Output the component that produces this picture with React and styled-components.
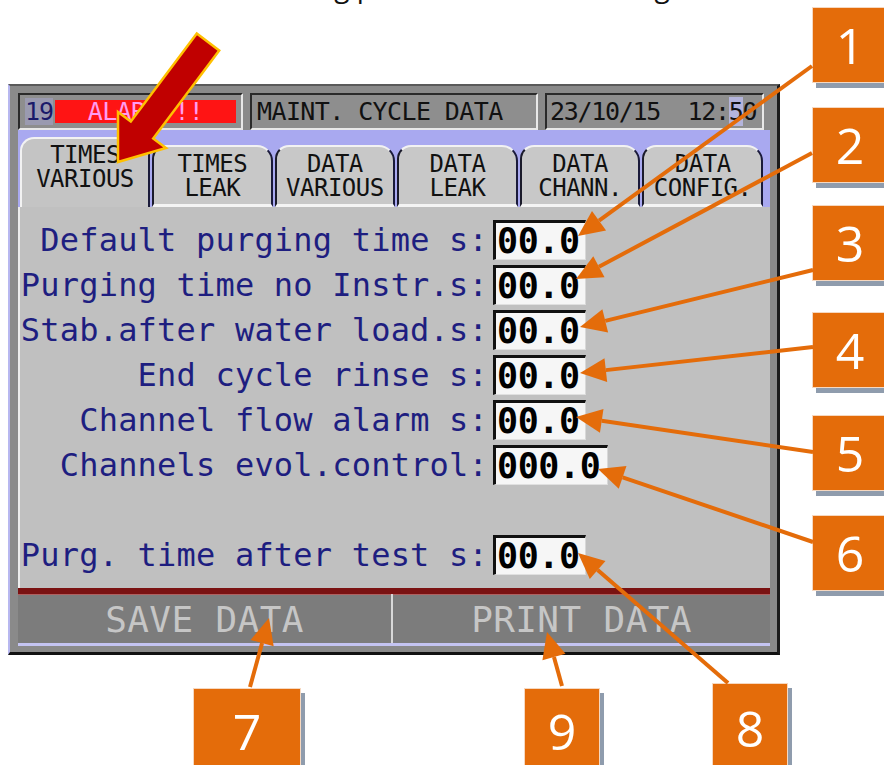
import * as React from "react"
import styled, { createGlobalStyle } from "styled-components"

const GlobalStyle = createGlobalStyle`
    html, body {
        margin: 0;
        padding: 0;
        background: #ffffff;
    }
`

const MONO = `"DejaVu Sans Mono", "Liberation Mono", monospace`
const ORANGE = "#e46c0a"

const Page = styled.div`
    position: relative;
    width: 884px;
    height: 765px;
    overflow: hidden;
    background: #ffffff;
    display: flex;
    flex-direction: column;
`

const MainRow = styled.div`
    display: flex;
    align-items: flex-start;
    height: 655px;
    flex-shrink: 0;
`

const LeftColumn = styled.div`
    width: 780px;
    flex-shrink: 0;
`

const Caption = styled.div`
    height: 84px;
    overflow: hidden;
`

const CaptionLine = styled.div`
    display: flex;
    margin-top: -28px;
    font-family: "Open Sans", sans-serif;
    font-size: 28px;
    line-height: 28px;
    color: #111;
    white-space: pre;
`

const CaptionWord = styled.span`
    margin-left: ${props => props.$left}px;
`

const Frame = styled.div`
    margin-left: 8px;
    width: 772px;
    height: 571px;
    box-sizing: border-box;
    background: #8a8a8a;
    border-top: 2px solid #5a5a5a;
    border-left: 2px solid #b8b8f0;
    border-right: 3px solid #1c1c1c;
    border-bottom: 3px solid #111;
    padding: 0 7px 0 8px;
    display: flex;
    flex-direction: column;
`

const Header = styled.div`
    height: 44px;
    box-sizing: border-box;
    padding-top: 7px;
    display: flex;
    gap: 7px;
`

const HeaderBox = styled.div`
    width: ${props => props.$width}px;
    height: 37px;
    box-sizing: border-box;
    border-top: 2px solid #2a2a2a;
    border-left: 2px solid #2a2a2a;
    border-right: 2px solid #e8e8e8;
    border-bottom: 2px solid #e8e8e8;
    background: #8e8e8e;
    display: flex;
    align-items: center;
    padding: 0 ${props => (props.$tight ? 3 : 5)}px;
    font-family: ${MONO};
    font-size: 25px;
    letter-spacing: ${props => (props.$tight ? -1.3 : -0.6)}px;
    color: #111;
    white-space: pre;
    overflow: hidden;
`

const AlarmNumber = styled.div`
    width: 28px;
    height: 27px;
    background: #9a9ab0;
    color: #1a1a6a;
    display: flex;
    align-items: center;
    font-family: ${MONO};
    font-size: 25px;
    letter-spacing: -1px;
`

const AlarmText = styled.div`
    flex: 1;
    height: 23px;
    margin-left: 2px;
    background: #ff1414;
    color: #ff9cf0;
    display: flex;
    align-items: center;
    justify-content: center;
    font-family: ${MONO};
    font-size: 25px;
    letter-spacing: -0.6px;
`

const Blink = styled.span`
    background: #b4b4dc;
`

const TabStrip = styled.div`
    height: 77px;
    box-sizing: border-box;
    background: #a9a9f0;
    padding: 7px 7px 0 2px;
    display: grid;
    grid-template-columns: 130px repeat(5, 1fr);
    column-gap: 2px;
    align-items: end;
`

const Tab = styled.div`
    height: ${props => (props.$active ? 70 : 62)}px;
    box-sizing: border-box;
    background: ${props => (props.$active ? "#c4c4c4" : "#c8c8c8")};
    border-radius: 14px 16px 0 0;
    border-top: 2px solid #f2f2f2;
    border-left: 2px solid ${props => (props.$active ? "#f2f2f2" : "#1a1a2a")};
    border-right: 2px solid #1a1a3a;
    border-bottom: ${props => (props.$active ? "none" : "3px solid #f4f4f4")};
    padding-top: ${props => (props.$active ? 4 : 5)}px;
    text-align: center;
    font-family: ${MONO};
    font-size: 24px;
    line-height: 24px;
    letter-spacing: -0.5px;
    color: #111;
    white-space: pre;
`

const Body = styled.div`
    height: 381px;
    box-sizing: border-box;
    background: #c0c0c0;
    border-left: 2px solid #ececec;
    padding-top: 13px;
`

const Row = styled.div`
    height: 45px;
    display: grid;
    grid-template-columns: 468px auto;
    column-gap: 5px;
    align-items: start;
`

const Label = styled.div`
    text-align: right;
    font-family: ${MONO};
    font-size: 32px;
    line-height: 40px;
    letter-spacing: 0.2px;
    color: #1e1e80;
    white-space: pre;
`

const ValueBox = styled.div`
    width: ${props => props.$width}px;
    height: 40px;
    box-sizing: border-box;
    background: #f6f6f6;
    border-top: 3px solid #111;
    border-left: 3px solid #111;
    border-right: 1px solid #d8d8d8;
    border-bottom: 1px solid #e0e0e0;
    font-family: ${MONO};
    font-weight: bold;
    font-size: 35px;
    line-height: 36px;
    letter-spacing: -0.4px;
    color: #000;
    padding-left: 1px;
`

const ButtonBar = styled.div`
    height: 58px;
    box-sizing: border-box;
    border-top: 6px solid #7a1212;
    border-bottom: 3px solid #c4c4f2;
    display: grid;
    grid-template-columns: 373px 1fr;
    column-gap: 2px;
    background: #d8d8d8;
`

const ActionButton = styled.div`
    background: #7c7c7c;
    border-top: 1px solid #b06060;
    display: flex;
    align-items: center;
    justify-content: center;
    font-family: ${MONO};
    font-size: 36px;
    letter-spacing: 0.4px;
    color: #c6c6c6;
    white-space: pre;
`

const RightColumn = styled.div`
    margin-left: 32px;
    display: flex;
    flex-direction: column;
`

const Callout = styled.div`
    width: ${props => props.$width || 76}px;
    height: ${props => props.$height || 76}px;
    margin-top: ${props => props.$top || 0}px;
    margin-left: ${props => props.$left || 0}px;
    flex-shrink: 0;
    box-sizing: border-box;
    background: ${ORANGE};
    border: 1px solid #f6d8c0;
    box-shadow: 4px 5px 0 #8f9cad;
    color: #ffffff;
    font-family: "Open Sans", "Liberation Sans", sans-serif;
    font-size: 50px;
    line-height: 1;
    display: flex;
    align-items: center;
    justify-content: center;
`

const BottomRow = styled.div`
    display: flex;
    align-items: flex-start;
`

const Overlay = styled.svg`
    position: absolute;
    left: 0;
    top: 0;
    width: 884px;
    height: 765px;
    pointer-events: none;
`

const rows = [
    { label: "Default purging time s:", value: "00.0" },
    { label: "Purging time no Instr.s:", value: "00.0" },
    { label: "Stab.after water load.s:", value: "00.0" },
    { label: "End cycle rinse s:", value: "00.0" },
    { label: "Channel flow alarm s:", value: "00.0" },
    { label: "Channels evol.control:", value: "000.0", wide: true },
    null,
    { label: "Purg. time after test s:", value: "00.0" },
]

const tabs = [
    "TIMES\nVARIOUS",
    "TIMES\nLEAK",
    "DATA\nVARIOUS",
    "DATA\nLEAK",
    "DATA\nCHANN.",
    "DATA\nCONFIG.",
]

const rightCallouts = [
    { n: 1, top: 7 },
    { n: 2, top: 24 },
    { n: 3, top: 22 },
    { n: 4, top: 31 },
    { n: 5, top: 27 },
    { n: 6, top: 24 },
]

const pointers = [
    [812, 66, 578, 236],
    [812, 153, 576, 279],
    [813, 270, 580, 327],
    [813, 347, 580, 373],
    [813, 452, 576, 417],
    [813, 542, 598, 469],
    [728, 683, 578, 553],
    [562, 686, 547, 632],
    [250, 687, 269, 618],
]

const Pointer = ({ x1, y1, x2, y2 }) => {
    const dx = x2 - x1
    const dy = y2 - y1
    const len = Math.hypot(dx, dy)
    const ux = dx / len
    const uy = dy / len
    const bx = x2 - ux * 26
    const by = y2 - uy * 26
    const nx = -uy * 12
    const ny = ux * 12
    return (
        <g>
            <line x1={x1} y1={y1} x2={bx} y2={by} stroke={ORANGE} strokeWidth="4" />
            <polygon
                points={`${x2},${y2} ${bx + nx},${by + ny} ${bx - nx},${by - ny}`}
                fill={ORANGE}
            />
        </g>
    )
}

const App = () => (
    <Page>
        <GlobalStyle />
        <MainRow>
            <LeftColumn>
                <Caption>
                    <CaptionLine>
                        <CaptionWord $left={300}>ting parameters</CaptionWord>
                        <CaptionWord $left={34}>according</CaptionWord>
                    </CaptionLine>
                </Caption>
                <Frame>
                    <Header>
                        <HeaderBox $width={225}>
                            <AlarmNumber>19</AlarmNumber>
                            <AlarmText>ALARM !!</AlarmText>
                        </HeaderBox>
                        <HeaderBox $width={288}>MAINT. CYCLE DATA</HeaderBox>
                        <HeaderBox $width={219} $tight>
                            23/10/15  12:<Blink>5</Blink>0
                        </HeaderBox>
                    </Header>
                    <TabStrip>
                        {tabs.map((t, i) => (
                            <Tab key={t} $active={i === 0}>{t}</Tab>
                        ))}
                    </TabStrip>
                    <Body>
                        {rows.map((r, i) =>
                            r ? (
                                <Row key={i}>
                                    <Label>{r.label}</Label>
                                    <ValueBox $width={r.wide ? 115 : 93}>{r.value}</ValueBox>
                                </Row>
                            ) : (
                                <Row key={i} />
                            )
                        )}
                    </Body>
                    <ButtonBar>
                        <ActionButton>SAVE DATA</ActionButton>
                        <ActionButton>PRINT DATA</ActionButton>
                    </ButtonBar>
                </Frame>
            </LeftColumn>
            <RightColumn>
                {rightCallouts.map(c => (
                    <Callout key={c.n} $top={c.top}>{c.n}</Callout>
                ))}
            </RightColumn>
        </MainRow>
        <BottomRow>
            <Callout $left={193} $top={33} $width={108} $height={85}>7</Callout>
            <Callout $left={223} $top={33} $width={76} $height={85}>9</Callout>
            <Callout $left={112} $top={28} $width={76} $height={90}>8</Callout>
        </BottomRow>
        <Overlay viewBox="0 0 884 765">
            {pointers.map((p, i) => (
                <Pointer key={i} x1={p[0]} y1={p[1]} x2={p[2]} y2={p[3]} />
            ))}
            <polygon
                points="196.8,33.6 219.2,50.4 153.2,138.4 166,148 118,162 118,112 130.8,121.6"
                fill="#c00000"
                stroke="#ffc000"
                strokeWidth="2.5"
                strokeLinejoin="miter"
            />
        </Overlay>
    </Page>
)

export default App
